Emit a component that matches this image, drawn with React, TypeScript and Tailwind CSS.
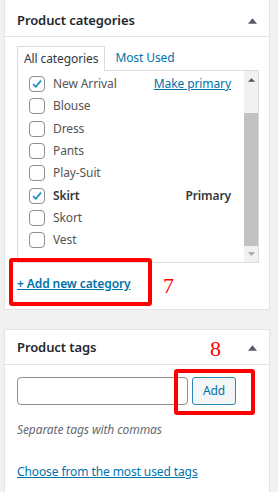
import React from "react"

const cats = [
  { name: "New Arrival", checked: true, extra: "make" },
  { name: "Blouse" },
  { name: "Dress" },
  { name: "Pants" },
  { name: "Play-Suit" },
  { name: "Skirt", checked: true, extra: "primary" },
  { name: "Skort" },
  { name: "Vest" },
]

function Check({ checked }: { checked?: boolean }) {
  return (
    <span className="w-[16px] h-[16px] shrink-0 rounded-[4px] border border-[#8c8f94] bg-white flex items-center justify-center">
      {checked && (
        <svg viewBox="0 0 16 16" className="w-[14px] h-[14px]">
          <path d="M3.5 8.2 L6.6 11.2 L12.6 4.2" fill="none" stroke="#1e8cbe" strokeWidth="2" />
        </svg>
      )}
    </span>
  )
}

function Arrow() {
  return (
    <svg viewBox="0 0 10 6" className="w-[9px] h-[6px]">
      <path d="M0 6 L5 0 L10 6 Z" fill="#555d66" />
    </svg>
  )
}

export default function App() {
  return (
    <div className="min-h-screen bg-[#f1f1f1] pl-[4px] text-[12px] tracking-[-0.1px] text-[#555] font-['Noto_Sans',sans-serif] overflow-hidden">
      {/* Product categories */}
      <div className="relative w-[266px] bg-white border-x border-b border-[#e2e4e7]">
        <div className="h-[37px] pt-[6px] flex items-center justify-between pl-[12px] pr-[12px] border-b border-[#e2e4e7]">
          <h2 className="text-[13px] font-semibold text-[#23282d]">Product categories</h2>
          <Arrow />
        </div>
        <div className="px-[12px] pt-[8px] pb-[16px]">
          <div className="flex items-end h-[25px]">
            <div className="h-[25px] px-[6px] flex items-center border-x border-t border-[#dcdcde] bg-white relative z-10 -mb-px text-[#32373c]">
              All categories
            </div>
            <div className="px-[10px] h-[25px] flex items-center text-[#0073aa]">Most Used</div>
          </div>
          <div className="h-[193px] w-[242px] border border-[#dcdcde] flex">
            <div className="flex-1 pl-[11px] pt-[2px]">
              {cats.map((c) => (
                <div key={c.name} className="h-[22.3px] flex items-center">
                  <Check checked={c.checked} />
                  <span className={"ml-[8px] " + (c.extra === "primary" ? "font-semibold text-[#32373c]" : "text-[#555]")}>
                    {c.name}
                  </span>
                  {c.extra === "make" && (
                    <span className="ml-auto mr-[13px] text-[#0073aa] underline">Make primary</span>
                  )}
                  {c.extra === "primary" && (
                    <span className="ml-auto mr-[13px] font-semibold text-[#32373c]">Primary</span>
                  )}
                </div>
              ))}
            </div>
            <div className="w-[14px] bg-[#f1f1f1] flex flex-col items-center">
              <div className="h-[18px] flex items-center">
                <svg viewBox="0 0 8 4" className="w-[7px] h-[4px]"><path d="M0 4 L4 0 L8 4 Z" fill="#505050" /></svg>
              </div>
              <div className="h-[24px]" />
              <div className="flex-1 w-[14px] bg-[#c1c1c1]" />
              <div className="h-[16px] flex items-center">
                <svg viewBox="0 0 8 4" className="w-[7px] h-[4px]"><path d="M0 0 L4 4 L8 0 Z" fill="#a3a3a3" /></svg>
              </div>
            </div>
          </div>
          <div className="mt-[12px] flex items-center">
            <span className="text-[#0073aa] underline font-semibold">+ Add new category</span>
          </div>
        </div>
        <div className="absolute left-[4px] top-[258px] w-[143px] h-[48px] border-[4px] border-[#ff0000] rounded-[3px]" />
        <span className="absolute left-[158px] top-[269px] text-[22px] text-[#ff0000] font-['Liberation_Serif',serif]">7</span>
      </div>

      {/* Product tags */}
      <div className="relative mt-[19px] w-[266px] bg-white border border-[#e2e4e7] pb-[20px]">
        <div className="h-[35px] pt-[1px] flex items-center justify-between pl-[12px] pr-[12px] border-b border-[#e2e4e7]">
          <h2 className="text-[13px] font-semibold text-[#23282d]">Product tags</h2>
          <Arrow />
        </div>
        <div className="px-[12px] pt-[12px]">
          <div className="flex items-center gap-[4px]">
            <div className="w-[171px] h-[28px] rounded-[4px] border border-[#8c8f94] bg-white" />
            <button className="h-[28px] px-[10px] rounded-[3px] border border-[#2c88b8] bg-[#f3f5f6] text-[#0071a1]">
              Add
            </button>
          </div>
          <p className="mt-[16px] italic text-[#646970]">Separate tags with commas</p>
          <p className="mt-[24px] text-[#0073aa] underline">Choose from the most used tags</p>
        </div>
        <div className="absolute left-[169px] top-[39px] w-[81px] h-[46px] border-[4px] border-[#ff0000] rounded-[3px]" />
        <span className="absolute left-[205px] top-[2px] text-[22px] text-[#ff0000] font-['Liberation_Serif',serif]">8</span>
      </div>
    </div>
  )
}
